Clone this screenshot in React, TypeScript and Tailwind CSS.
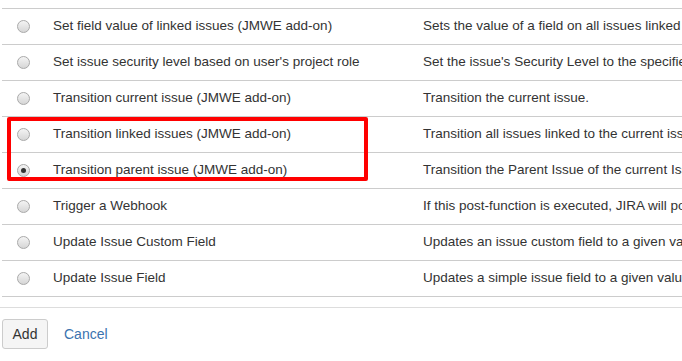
const rows = [
  {
    name: "Set field value of linked issues (JMWE add-on)",
    desc: "Sets the value of a field on all issues linked to the current issue.",
  },
  {
    name: "Set issue security level based on user's project role",
    desc: "Set the issue's Security Level to the specified level.",
  },
  {
    name: "Transition current issue (JMWE add-on)",
    desc: "Transition the current issue.",
  },
  {
    name: "Transition linked issues (JMWE add-on)",
    desc: "Transition all issues linked to the current issue.",
  },
  {
    name: "Transition parent issue (JMWE add-on)",
    desc: "Transition the Parent Issue of the current Issue.",
    checked: true,
  },
  {
    name: "Trigger a Webhook",
    desc: "If this post-function is executed, JIRA will post the issue content.",
  },
  {
    name: "Update Issue Custom Field",
    desc: "Updates an issue custom field to a given value.",
  },
  {
    name: "Update Issue Field",
    desc: "Updates a simple issue field to a given value.",
  },
];

function Radio({ checked }: { checked?: boolean }) {
  return (
    <span className="flex h-[13px] w-[13px] items-center justify-center rounded-full border border-[#a9a9a9] bg-gradient-to-b from-[#f4f4f4] to-[#d6d6d6]">
      {checked && <span className="h-[5px] w-[5px] rounded-full bg-[#333]" />}
    </span>
  );
}

export default function App() {
  return (
    <div className="relative h-[361px] w-[682px] overflow-hidden bg-white pt-2 font-['Liberation_Sans',Arial,sans-serif] text-[13.5px] text-[#333]">
      <div className="ml-[2px] w-[760px] border-b border-[#ccc]">
        {rows.map((row) => (
          <div
            key={row.name}
            className="flex h-[36px] items-center whitespace-nowrap border-t border-[#ccc]"
          >
            <div className="flex w-[51px] shrink-0 justify-center pl-[1px] pr-[10px]">
              <Radio checked={row.checked} />
            </div>
            <div className="w-[370px] shrink-0">{row.name}</div>
            <div className="shrink-0">{row.desc}</div>
          </div>
        ))}
      </div>
      <div className="mt-[10px] border-t border-[#ddd] pt-[11px] pl-[2px]">
        <div className="flex items-center">
          <button className="h-[30px] w-[46px] rounded-[3px] border border-[#ccc] bg-[#f5f5f5] text-[14px] text-[#333]">
            Add
          </button>
          <a className="ml-[16px] text-[14px] text-[#3b73af]">Cancel</a>
        </div>
      </div>
      <div className="absolute left-[7px] top-[117px] h-[64px] w-[361px] rounded-[2px] border-[4px] border-[#ff0000]" />
    </div>
  );
}
